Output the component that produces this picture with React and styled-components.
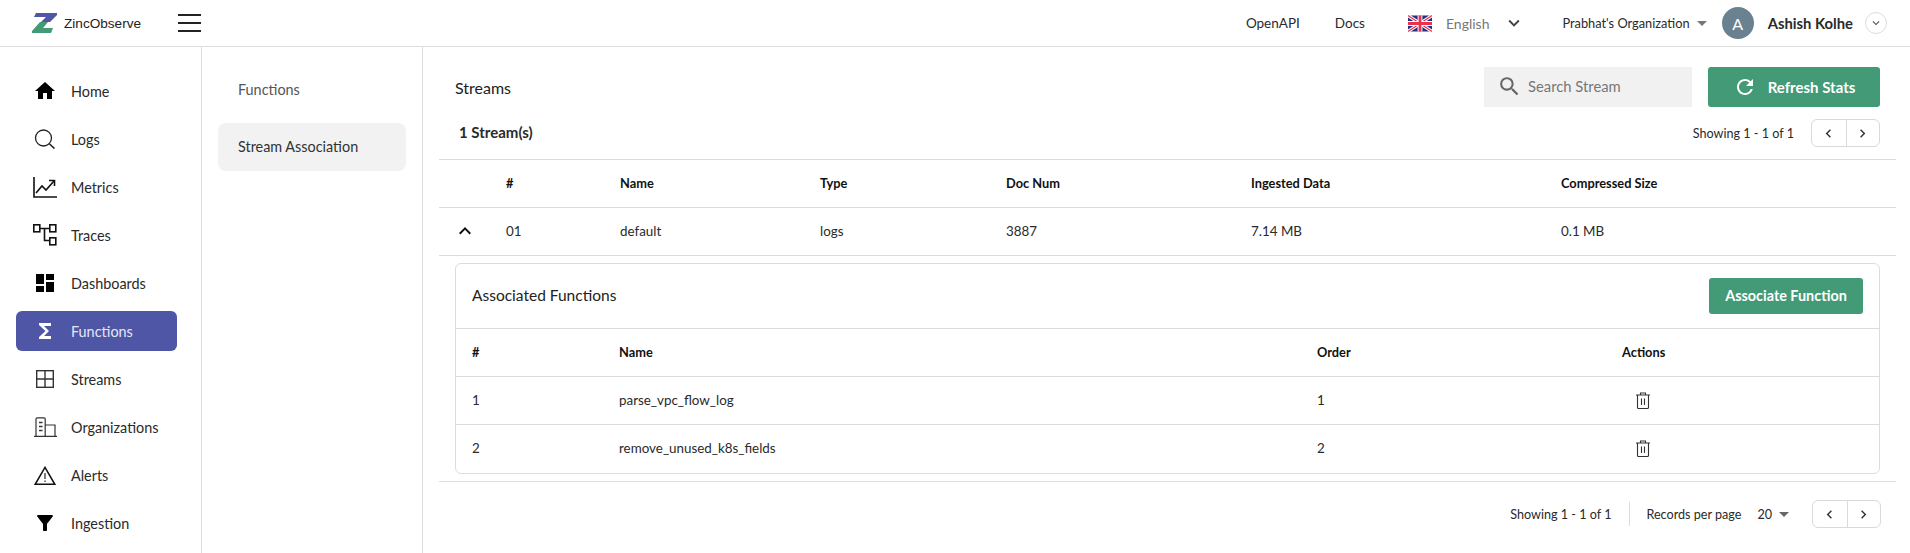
import React from "react";
import styled, { createGlobalStyle } from "styled-components";
import {
  MdHome,
  MdDashboard,
  MdFunctions,
  MdFilterAlt,
  MdRefresh,
  MdSearch,
  MdKeyboardArrowDown,
  MdKeyboardArrowUp,
  MdChevronLeft,
  MdChevronRight,
  MdArrowDropDown,
} from "react-icons/md";

const GlobalStyle = createGlobalStyle`
  html, body {
    margin: 0;
    height: 100%;
    background: #fff;
    overflow: hidden;
  }
  body {
    font-family: "Lato", "Noto Sans", sans-serif;
    font-size: 14px;
    color: #2a2a2a;
  }
  * {
    box-sizing: border-box;
  }
`;

const Logo = () => (
  <svg width="26" height="20" viewBox="0 0 26 20">
    <polygon points="4,0 25,0 25,2 18,9 9,9 14,4 2,4" fill="#4f56a6" />
    <polygon points="8,9 16,9 11,15 21,15 19,20 0,20 0,18" fill="#439a76" />
  </svg>
);

const SearchLine = () => (
  <svg width="22" height="20" viewBox="0 0 22 20" fill="none" stroke="#222" strokeWidth="1.3">
    <circle cx="9.5" cy="9" r="8" />
    <path d="M15 14.5L20.5 19.5" strokeWidth="1.6" />
  </svg>
);

const MetricsIcon = () => (
  <svg width="24" height="21" viewBox="0 0 24 21" fill="none" stroke="#111" strokeWidth="1.6">
    <path d="M1 0V20H24" />
    <path d="M3 16L9 9L13 13L21 4" />
    <path d="M16 3.5H21.5V9" />
  </svg>
);

const TracesIcon = () => (
  <svg width="24" height="22" viewBox="0 0 24 22" fill="none" stroke="#111" strokeWidth="1.6">
    <rect x="0.8" y="0.8" width="6" height="7" />
    <rect x="16.8" y="0.8" width="6" height="7" />
    <rect x="16.8" y="13.8" width="6" height="7" />
    <path d="M7 4.5h10M11.5 4.5v12h5" />
  </svg>
);

const StreamsIcon = () => (
  <svg width="18" height="18" viewBox="0 0 18 18" fill="none" stroke="#333" strokeWidth="1.4">
    <rect x="0.7" y="0.7" width="16.6" height="16.6" />
    <path d="M9 0.7v16.6M0.7 9h16.6" />
  </svg>
);

const OrgIcon = () => (
  <svg width="23" height="20" viewBox="0 0 23 20" fill="none" stroke="#333" strokeWidth="1.2">
    <path d="M0 19.4h23M2 19.4V2a1.2 1.2 0 0 1 1.2-1.2H10A1.2 1.2 0 0 1 11.2 2v17.4M11.2 8H21v11.4" />
    <path d="M5 5.5h3.5M5 9.5h3.5M5 13.5h3.5" strokeWidth="1.5" />
  </svg>
);

const AlertIcon = () => (
  <svg width="22" height="19" viewBox="0 0 22 19" fill="none" stroke="#111" strokeWidth="1.5">
    <path d="M11 1.4L1.2 18.3H20.8Z" strokeLinejoin="miter" />
    <path d="M11 7V13M11 14.6V16" strokeWidth="1.1" />
  </svg>
);

const TrashIcon = () => (
  <svg width="14" height="17" viewBox="0 0 14 17" fill="none" stroke="#333" strokeWidth="1.1">
    <path d="M0 3h14M4.5 3V1h5v2" />
    <path d="M1.5 3v12.5a1 1 0 0 0 1 1h9a1 1 0 0 0 1-1V3" />
    <path d="M5.5 6.5v6.5M8.5 6.5v6.5" />
  </svg>
);

const UkFlag = () => (
  <svg width="24" height="17" viewBox="0 0 60 40">
    <rect width="60" height="40" fill="#26307f" />
    <path d="M0 0L60 40M60 0L0 40" stroke="#fff" strokeWidth="8" />
    <path d="M0 0L60 40M60 0L0 40" stroke="#e8324f" strokeWidth="3" />
    <path d="M30 0V40M0 20H60" stroke="#fff" strokeWidth="12" />
    <path d="M30 0V40M0 20H60" stroke="#e8324f" strokeWidth="7" />
  </svg>
);

const navItems = [
  { label: "Home", icon: <MdHome size={24} color="#000" /> },
  { label: "Logs", icon: <SearchLine /> },
  { label: "Metrics", icon: <MetricsIcon /> },
  { label: "Traces", icon: <TracesIcon /> },
  { label: "Dashboards", icon: <MdDashboard size={24} color="#000" /> },
  { label: "Functions", icon: <MdFunctions size={24} color="#fff" />, active: true },
  { label: "Streams", icon: <StreamsIcon /> },
  { label: "Organizations", icon: <OrgIcon /> },
  { label: "Alerts", icon: <AlertIcon /> },
  { label: "Ingestion", icon: <MdFilterAlt size={24} color="#000" /> },
];

const streamCols = "67px 114px 200px 186px 245px 310px 1fr";
const funcCols = "147px 698px 305px 1fr";

const Page = styled.div`
  display: flex;
  flex-direction: column;
  height: 100vh;
`;

const Header = styled.header`
  display: flex;
  align-items: center;
  height: 47px;
  flex-shrink: 0;
  padding: 0 23px 0 32px;
  border-bottom: 1px solid #dcdcdc;
`;

const Brand = styled.div`
  display: flex;
  align-items: center;
  gap: 6px;
  width: 146px;
  font-family: "Liberation Sans", sans-serif;
  font-size: 13.6px;
  color: #222;
`;

const Burger = styled.div`
  display: flex;
  flex-direction: column;
  justify-content: space-between;
  width: 23px;
  height: 18px;
  span {
    height: 2px;
    background: #222;
  }
`;

const HeaderRight = styled.div`
  display: flex;
  align-items: center;
  margin-left: auto;
`;

const HeaderLink = styled.span`
  font-size: 13.5px;
  margin-right: ${(p) => p.$gap}px;
`;

const Language = styled.div`
  display: flex;
  align-items: center;
  gap: 14px;
  color: #777;
  margin-right: 37px;
`;

const OrgPicker = styled.div`
  display: flex;
  align-items: center;
  font-size: 12.8px;
  margin-right: 8px;
`;

const Avatar = styled.div`
  display: flex;
  align-items: center;
  justify-content: center;
  width: 32px;
  height: 32px;
  border-radius: 50%;
  background: #6a8290;
  color: #fff;
  font-size: 16px;
  margin-right: 14px;
`;

const UserName = styled.span`
  font-weight: 700;
  font-size: 14.8px;
  margin-right: 12px;
`;

const RoundBtn = styled.div`
  display: flex;
  align-items: center;
  justify-content: center;
  width: 22px;
  height: 22px;
  border-radius: 50%;
  border: 1px solid #ddd;
  color: #555;
`;

const Body = styled.div`
  display: flex;
  flex: 1;
  min-height: 0;
`;

const Sidebar = styled.nav`
  display: flex;
  flex-direction: column;
  gap: 8px;
  width: 202px;
  flex-shrink: 0;
  padding: 24px 24px 0 16px;
  border-right: 1px solid #dcdcdc;
  font-size: 14.4px;
`;

const NavItem = styled.div`
  display: flex;
  align-items: center;
  height: 40px;
  flex-shrink: 0;
  border-radius: 6px;
  background: ${(p) => (p.$active ? "#4f56a6" : "transparent")};
  color: ${(p) => (p.$active ? "#e4e6f4" : "#2a2a2a")};
`;

const NavIcon = styled.span`
  display: flex;
  justify-content: center;
  width: 52px;
  margin-left: 3px;
`;

const SubPanel = styled.aside`
  display: flex;
  flex-direction: column;
  gap: 9px;
  width: 221px;
  flex-shrink: 0;
  padding: 19px 16px 0;
  border-right: 1px solid #dcdcdc;
  font-size: 14.4px;
`;

const SubItem = styled.div`
  display: flex;
  align-items: center;
  height: 48px;
  padding: 0 0 2px 20px;
  border-radius: 8px;
  background: ${(p) => (p.$active ? "#f2f2f2" : "transparent")};
  color: ${(p) => (p.$active ? "#333" : "#555")};
`;

const Main = styled.main`
  flex: 1;
  min-width: 0;
  padding: 20px 14px 0 16px;
`;

const TitleRow = styled.div`
  display: flex;
  align-items: center;
  justify-content: space-between;
  padding: 0 16px;
`;

const Title = styled.h1`
  margin: 0;
  font-size: 16px;
  font-weight: 400;
  color: #222;
`;

const Tools = styled.div`
  display: flex;
  gap: 16px;
`;

const SearchBox = styled.div`
  display: flex;
  align-items: center;
  gap: 6px;
  width: 208px;
  height: 40px;
  padding: 0 0 2px 13px;
  background: #f1f1f1;
  color: #777;
  font-size: 14.8px;
`;

const GreenButton = styled.button`
  display: flex;
  align-items: center;
  justify-content: center;
  gap: 11px;
  width: ${(p) => p.$width}px;
  height: ${(p) => p.$height}px;
  padding: 0 0 1px;
  border: 0;
  border-radius: 3px;
  background: #439a76;
  color: #fff;
  font: 700 ${(p) => p.$size}px "Lato", sans-serif;
`;

const CountRow = styled.div`
  display: flex;
  align-items: center;
  justify-content: space-between;
  height: 28px;
  margin-top: 12px;
  padding: 0 16px 0 20px;
`;

const CountLabel = styled.span`
  font-weight: 700;
  font-size: 15px;
  margin-top: -2px;
`;

const PagerGroup = styled.div`
  display: flex;
  align-items: center;
  gap: 17px;
  font-size: 12.6px;
`;

const Pager = styled.div`
  display: flex;
  height: 28px;
  border: 1px solid #d9d9d9;
  border-radius: 6px;
  color: #333;
`;

const PagerBtn = styled.span`
  display: flex;
  align-items: center;
  justify-content: center;
  width: 33.5px;
  & + & {
    border-left: 1px solid #d9d9d9;
  }
`;

const Table = styled.div`
  margin-top: 12px;
  border-top: 1px solid #dcdcdc;
`;

const Row = styled.div`
  display: grid;
  grid-template-columns: ${(p) => p.$cols};
  align-items: center;
  height: 48px;
  padding: 0 0 2px ${(p) => p.$inset || 0}px;
  border-bottom: ${(p) => (p.$last ? "0" : "1px solid #dcdcdc")};
  font-size: ${(p) => (p.$head ? 12.8 : 13.4)}px;
  font-weight: ${(p) => (p.$head ? 700 : 400)};
  color: ${(p) => (p.$head ? "#111" : "#2a2a2a")};
`;

const Toggle = styled.span`
  display: flex;
  padding: 1px 0 0 14px;
`;

const ExpandBody = styled.div`
  padding: 7px 16px;
  border-bottom: 1px solid #dcdcdc;
`;

const Card = styled.section`
  border: 1px solid #dcdcdc;
  border-radius: 6px;
`;

const CardHead = styled.div`
  display: flex;
  align-items: center;
  justify-content: space-between;
  height: 65px;
  padding: 0 16px;
  border-bottom: 1px solid #dcdcdc;
`;

const CardTitle = styled.h2`
  margin: 0 0 2px;
  font-size: 15.5px;
  font-weight: 400;
  color: #222;
`;

const TrashCell = styled.span`
  display: flex;
  padding-left: 14px;
  padding-top: 1px;
`;

const Footer = styled.div`
  display: flex;
  align-items: center;
  justify-content: flex-end;
  height: 28px;
  margin-top: 18px;
  padding-right: 15px;
  font-size: 12.6px;
`;

const Divider = styled.span`
  width: 1px;
  height: 24px;
  margin: 0 16px 0 18px;
  background: #dcdcdc;
`;

const PerPage = styled.div`
  display: flex;
  align-items: center;
  gap: 16px;
  margin-right: 16px;
  span:last-child {
    display: flex;
    align-items: center;
  }
`;

const PagerButtons = () => (
  <Pager>
    <PagerBtn>
      <MdChevronLeft size={17} />
    </PagerBtn>
    <PagerBtn>
      <MdChevronRight size={17} />
    </PagerBtn>
  </Pager>
);

const App = () => {
  return (
    <Page>
      <GlobalStyle />
      <Header>
        <Brand>
          <Logo />
          ZincObserve
        </Brand>
        <Burger>
          <span />
          <span />
          <span />
        </Burger>
        <HeaderRight>
          <HeaderLink $gap={35}>OpenAPI</HeaderLink>
          <HeaderLink $gap={43}>Docs</HeaderLink>
          <Language>
            <UkFlag />
            English
            <MdKeyboardArrowDown size={22} color="#444" />
          </Language>
          <OrgPicker>
            Prabhat's Organization
            <MdArrowDropDown size={24} color="#777" />
          </OrgPicker>
          <Avatar>A</Avatar>
          <UserName>Ashish Kolhe</UserName>
          <RoundBtn>
            <MdKeyboardArrowDown size={14} />
          </RoundBtn>
        </HeaderRight>
      </Header>
      <Body>
        <Sidebar>
          {navItems.map((item) => (
            <NavItem key={item.label} $active={item.active}>
              <NavIcon>{item.icon}</NavIcon>
              {item.label}
            </NavItem>
          ))}
        </Sidebar>
        <SubPanel>
          <SubItem>Functions</SubItem>
          <SubItem $active>Stream Association</SubItem>
        </SubPanel>
        <Main>
          <TitleRow>
            <Title>Streams</Title>
            <Tools>
              <SearchBox>
                <MdSearch size={25} color="#666" />
                Search Stream
              </SearchBox>
              <GreenButton $width={172} $height={40} $size={15}>
                <MdRefresh size={24} />
                Refresh Stats
              </GreenButton>
            </Tools>
          </TitleRow>
          <CountRow>
            <CountLabel>1 Stream(s)</CountLabel>
            <PagerGroup>
              Showing 1 - 1 of 1
              <PagerButtons />
            </PagerGroup>
          </CountRow>
          <Table>
            <Row $cols={streamCols} $head>
              <span />
              <span>#</span>
              <span>Name</span>
              <span>Type</span>
              <span>Doc Num</span>
              <span>Ingested Data</span>
              <span>Compressed Size</span>
            </Row>
            <Row $cols={streamCols}>
              <Toggle>
                <MdKeyboardArrowUp size={24} color="#111" />
              </Toggle>
              <span>01</span>
              <span>default</span>
              <span>logs</span>
              <span>3887</span>
              <span>7.14 MB</span>
              <span>0.1 MB</span>
            </Row>
            <ExpandBody>
              <Card>
                <CardHead>
                  <CardTitle>Associated Functions</CardTitle>
                  <GreenButton $width={154} $height={36} $size={14.4}>
                    Associate Function
                  </GreenButton>
                </CardHead>
                <Row $cols={funcCols} $inset={16} $head>
                  <span>#</span>
                  <span>Name</span>
                  <span>Order</span>
                  <span>Actions</span>
                </Row>
                <Row $cols={funcCols} $inset={16}>
                  <span>1</span>
                  <span>parse_vpc_flow_log</span>
                  <span>1</span>
                  <TrashCell>
                    <TrashIcon />
                  </TrashCell>
                </Row>
                <Row $cols={funcCols} $inset={16} $last>
                  <span>2</span>
                  <span>remove_unused_k8s_fields</span>
                  <span>2</span>
                  <TrashCell>
                    <TrashIcon />
                  </TrashCell>
                </Row>
              </Card>
            </ExpandBody>
          </Table>
          <Footer>
            Showing 1 - 1 of 1
            <Divider />
            <PerPage>
              <span>Records per page</span>
              <span>
                20
                <MdArrowDropDown size={24} color="#666" />
              </span>
            </PerPage>
            <PagerButtons />
          </Footer>
        </Main>
      </Body>
    </Page>
  );
};

export default App;
